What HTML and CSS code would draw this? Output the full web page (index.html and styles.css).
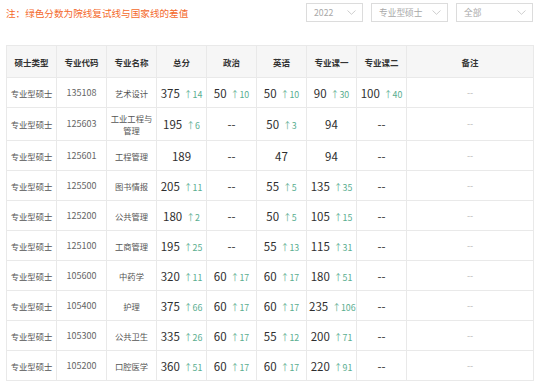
FILE: index.html
```html
<!DOCTYPE html>
<html lang="zh">
<head>
<meta charset="utf-8">
<title>复试线</title>
<link rel="stylesheet" href="styles.css">
</head>
<body>
<div class="topbar">
  <div class="note">注：绿色分数为院线复试线与国家线的差值</div>
  <div class="filters">
    <div class="select s-year"><span>2022</span><svg class="chev" width="9" height="5" viewBox="0 0 9 5"><path d="M0.5 0.5 L4.5 4.3 L8.5 0.5" fill="none" stroke="#c8c8c8" stroke-width="0.9"/></svg></div>
    <div class="select s-wide"><span>专业型硕士</span><svg class="chev" width="9" height="5" viewBox="0 0 9 5"><path d="M0.5 0.5 L4.5 4.3 L8.5 0.5" fill="none" stroke="#c8c8c8" stroke-width="0.9"/></svg></div>
    <div class="select s-wide"><span>全部</span><svg class="chev" width="9" height="5" viewBox="0 0 9 5"><path d="M0.5 0.5 L4.5 4.3 L8.5 0.5" fill="none" stroke="#c8c8c8" stroke-width="0.9"/></svg></div>
  </div>
</div>
<table class="grid">
  <colgroup>
    <col class="c"><col class="c"><col class="c"><col class="c"><col class="c"><col class="c"><col class="c"><col class="c"><col class="last">
  </colgroup>
  <thead>
    <tr><th>硕士类型</th><th>专业代码</th><th>专业名称</th><th>总分</th><th>政治</th><th>英语</th><th>专业课一</th><th>专业课二</th><th>备注</th></tr>
  </thead>
  <tbody>
    <tr><td class="t">专业型硕士</td><td class="code">135108</td><td class="t">艺术设计</td><td><span class="n">375</span><span class="d">↑14</span></td><td><span class="n">50</span><span class="d">↑10</span></td><td><span class="n">50</span><span class="d">↑10</span></td><td><span class="n">90</span><span class="d">↑30</span></td><td><span class="n">100</span><span class="d">↑40</span></td><td class="rm">--</td></tr>
    <tr><td class="t">专业型硕士</td><td class="code">125603</td><td class="t wrap">工业工程与管理</td><td><span class="n">195</span><span class="d">↑6</span></td><td class="n">--</td><td><span class="n">50</span><span class="d">↑3</span></td><td class="n">94</td><td class="n">--</td><td class="rm">--</td></tr>
    <tr><td class="t">专业型硕士</td><td class="code">125601</td><td class="t">工程管理</td><td class="n">189</td><td class="n">--</td><td class="n">47</td><td class="n">94</td><td class="n">--</td><td class="rm">--</td></tr>
    <tr><td class="t">专业型硕士</td><td class="code">125500</td><td class="t">图书情报</td><td><span class="n">205</span><span class="d">↑11</span></td><td class="n">--</td><td><span class="n">55</span><span class="d">↑5</span></td><td><span class="n">135</span><span class="d">↑35</span></td><td class="n">--</td><td class="rm">--</td></tr>
    <tr><td class="t">专业型硕士</td><td class="code">125200</td><td class="t">公共管理</td><td><span class="n">180</span><span class="d">↑2</span></td><td class="n">--</td><td><span class="n">50</span><span class="d">↑5</span></td><td><span class="n">105</span><span class="d">↑15</span></td><td class="n">--</td><td class="rm">--</td></tr>
    <tr><td class="t">专业型硕士</td><td class="code">125100</td><td class="t">工商管理</td><td><span class="n">195</span><span class="d">↑25</span></td><td class="n">--</td><td><span class="n">55</span><span class="d">↑13</span></td><td><span class="n">115</span><span class="d">↑31</span></td><td class="n">--</td><td class="rm">--</td></tr>
    <tr><td class="t">专业型硕士</td><td class="code">105600</td><td class="t">中药学</td><td><span class="n">320</span><span class="d">↑11</span></td><td><span class="n">60</span><span class="d">↑17</span></td><td><span class="n">60</span><span class="d">↑17</span></td><td><span class="n">180</span><span class="d">↑51</span></td><td class="n">--</td><td class="rm">--</td></tr>
    <tr><td class="t">专业型硕士</td><td class="code">105400</td><td class="t">护理</td><td><span class="n">375</span><span class="d">↑66</span></td><td><span class="n">60</span><span class="d">↑17</span></td><td><span class="n">60</span><span class="d">↑17</span></td><td><span class="n">235</span><span class="d">↑106</span></td><td class="n">--</td><td class="rm">--</td></tr>
    <tr><td class="t">专业型硕士</td><td class="code">105300</td><td class="t">公共卫生</td><td><span class="n">335</span><span class="d">↑26</span></td><td><span class="n">60</span><span class="d">↑17</span></td><td><span class="n">55</span><span class="d">↑12</span></td><td><span class="n">200</span><span class="d">↑71</span></td><td class="n">--</td><td class="rm">--</td></tr>
    <tr><td class="t">专业型硕士</td><td class="code">105200</td><td class="t">口腔医学</td><td><span class="n">360</span><span class="d">↑51</span></td><td><span class="n">60</span><span class="d">↑17</span></td><td><span class="n">60</span><span class="d">↑17</span></td><td><span class="n">220</span><span class="d">↑91</span></td><td class="n">--</td><td class="rm">--</td></tr>
  </tbody>
</table>
</body>
</html>
```
FILE: styles.css
```css
html, body {
  margin: 0;
  padding: 0;
  background: #ffffff;
}
body {
  font-family: "Noto Sans CJK SC", "Noto Sans", sans-serif;
  color: #333333;
  width: 539px;
}
.topbar {
  display: flex;
  justify-content: space-between;
  align-items: center;
  padding: 3px 6px 0 6px;
  height: 19px;
}
.note {
  font-size: 9.6px;
  line-height: 12px;
  color: #f4692b;
  margin-top: 1px;
}
.filters {
  display: flex;
  gap: 8px;
}
.select {
  box-sizing: border-box;
  height: 19px;
  border: 1px solid #dcdcdc;
  display: flex;
  align-items: center;
  justify-content: space-between;
  padding: 0 6px 0 7px;
  font-size: 8.7px;
  color: #a8a8a8;
  line-height: 12px;
}
.s-year { width: 57px; }
.s-wide { width: 77px; }
.chev { display: block; }
.grid {
  border-collapse: collapse;
  table-layout: fixed;
  width: 527px;
  margin: 23px 0 0 6px;
}
col.c { width: 50px; }
col.last { width: 127px; }
.grid th, .grid td {
  border: 1px solid #e9e9e9;
  text-align: center;
  vertical-align: middle;
  padding: 3px 2px;
}
.grid th {
  background: #f6f6f6;
  height: 25px;
  font-size: 8.5px;
  font-weight: bold;
  color: #333333;
  line-height: 12px;
}
.grid td {
  height: 23px;
  line-height: 12px;
  white-space: nowrap;
}
.grid td.t {
  font-size: 8.3px;
  color: #555555;
}
.grid td.wrap {
  white-space: normal;
  padding: 4px 3px;
}
.grid td.code {
  font-size: 9px;
  color: #666666;
}
.n {
  font-size: 11.5px;
  color: #2f2f2f;
}
.d {
  font-size: 8.8px;
  color: #5aae90;
  margin-left: 4px;
}
.grid td.rm {
  font-size: 9px;
  color: #b8b8b8;
}
```
